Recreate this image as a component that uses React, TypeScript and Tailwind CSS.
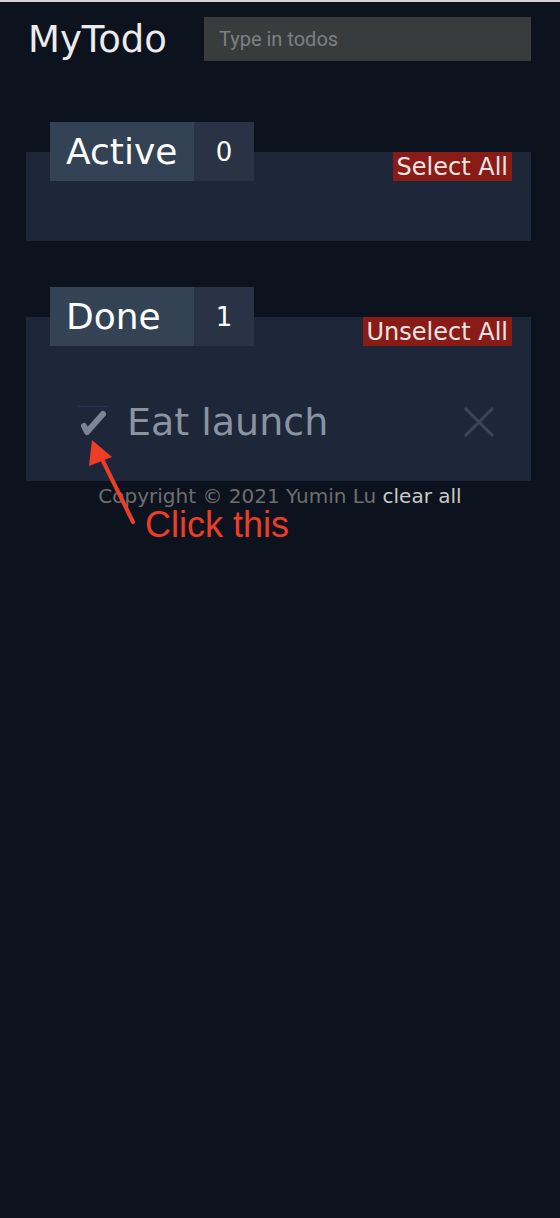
import React from "react";

const mont = { fontFamily: '"DejaVu Sans", "Noto Sans", sans-serif' };

type Todo = { id: number; text: string; done: boolean };

const todos: Todo[] = [{ id: 1, text: "Eat launch", done: true }];

const Section = ({
  title,
  count,
  action,
  items,
  bodyClass,
}: {
  title: string;
  count: number;
  action: string;
  items: Todo[];
  bodyClass: string;
}) => {
  return (
    <div className="mx-[26px] mr-[29px] bg-[#1e263a]">
      <div className="flex items-start justify-between">
        <div className="ml-6 -mt-[30px] flex h-[59px]">
          <div className="flex w-[144px] items-center bg-[#334355] pl-4 text-[36px] leading-none text-white">
            {title}
          </div>
          <div className="flex w-[60px] items-center justify-center bg-[#2a3346] text-[26px] leading-none text-white">
            {count}
          </div>
        </div>
        <button className="mr-[19px] flex h-[29px] items-center bg-[#8a1c17] px-[4px] text-[24px] leading-none text-[#ece4e4]">
          {action}
        </button>
      </div>
      <div className={bodyClass}>
        {items.map((t) => (
          <div key={t.id} className="flex items-center">
            <button className="ml-[52px] flex h-[32px] w-[30px] items-center justify-center border-t border-[#27345a]">
              <svg width="30" height="30" viewBox="0 0 30 30">
                <path
                  d="M6 18 L9 24 L25 6"
                  stroke="#7c8595"
                  strokeWidth="6"
                  strokeLinecap="round"
                  strokeLinejoin="round"
                  fill="none"
                />
              </svg>
            </button>
            <span className="ml-[19px] text-[38px] leading-none text-[#8b93a1]">
              {t.text}
            </span>
            <svg
              className="ml-auto mr-[36px]"
              width="32"
              height="32"
              viewBox="0 0 32 32"
            >
              <path
                d="M2 2 L30 30 M30 2 L2 30"
                stroke="#3c4659"
                strokeWidth="3"
                fill="none"
              />
            </svg>
          </div>
        ))}
      </div>
    </div>
  );
};

export default function App() {
  const active = todos.filter((t) => !t.done);
  const done = todos.filter((t) => t.done);
  return (
    <div
      className="relative min-h-[1218px] w-full overflow-hidden bg-[#0d131e]"
      style={mont}
    >
      <div className="h-[2px] bg-[#d4d4d4]" />
      <header className="flex items-center pt-[15px]">
        <h1 className="ml-[28px] w-[176px] text-[37px] font-normal leading-none text-[#ececec]">
          MyTodo
        </h1>
        <input
          className="h-[44px] w-[327px] bg-[#393c3c] px-[15px] text-[20px] text-white outline-none placeholder:text-[#7d8080]"
          style={{ fontFamily: 'Roboto, "Liberation Sans", sans-serif' }}
          placeholder="Type in todos"
        />
      </header>

      <div className="mt-[91px]">
        <Section
          title="Active"
          count={active.length}
          action="Select All"
          items={active}
          bodyClass="h-[60px]"
        />
      </div>

      <div className="mt-[76px]">
        <Section
          title="Done"
          count={done.length}
          action="Unselect All"
          items={done}
          bodyClass="h-[135px] pt-[57px]"
        />
      </div>

      <footer className="mt-[5px] text-center text-[20px] leading-[20px] text-[#6e6e6e]">
        Copyright © 2021 Yumin Lu{" "}
        <button className="leading-[20px] text-[#c9c9c9]">clear all</button>
      </footer>

      {/* annotation */}
      <svg
        className="pointer-events-none absolute left-0 top-0"
        width="560"
        height="600"
      >
        <line
          x1="133"
          y1="522"
          x2="100"
          y2="455"
          stroke="#ee3d26"
          strokeWidth="4"
          strokeLinecap="round"
        />
        <polygon points="92,440 89,466 112,457" fill="#ee3d26" />
      </svg>
      <div
        className="absolute left-[145px] top-[507px] text-[36px] leading-none text-[#ee3d26]"
        style={{ fontFamily: '"Liberation Sans", Arial, sans-serif' }}
      >
        Click this
      </div>
    </div>
  );
}
